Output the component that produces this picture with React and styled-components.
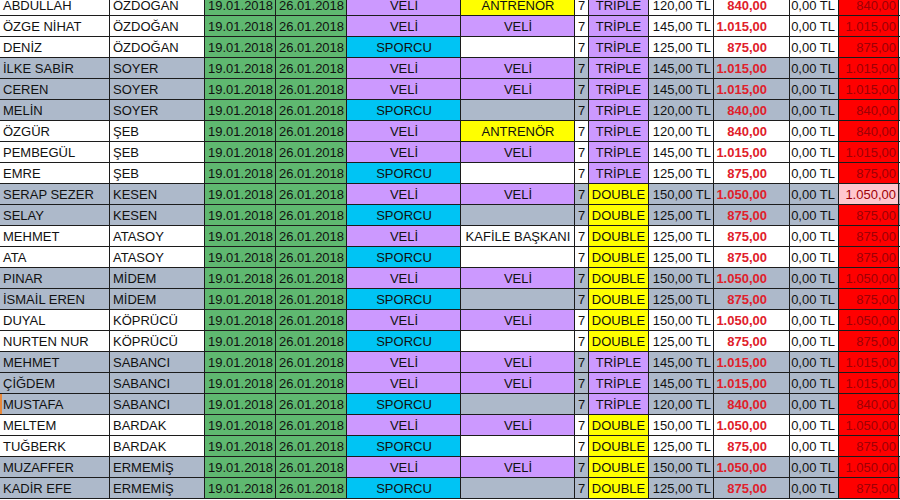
import React from "react";
import styled, { createGlobalStyle } from "styled-components";

const Global = createGlobalStyle`
  html, body { margin: 0; padding: 0; background: #ffffff; overflow: hidden; }
  #root { width: 900px; height: 500px; overflow: hidden; }
`;

const C = {
  white: "#ffffff",
  gray: "#adb9ca",
  green: "#5fb870",
  purple: "#cc99ff",
  cyan: "#00c4f4",
  yellow: "#ffff00",
  red: "#ff0000",
  pink: "#ffc7ce",
  line: "#1c1c1c",
};

const Sheet = styled.div`
  margin-top: -5px;
  display: flex;
  flex-direction: column;
  font-family: "Liberation Sans", Arial, sans-serif;
  font-size: 13px;
  color: #111111;
`;

const Row = styled.div`
  display: grid;
  grid-template-columns: 110px 95px 71px 71px 114px 114px 14px 60px 65px 76px 49px 60px 1fr;
  height: 21px;
  background: ${(p) => p.$bg};
`;

const Cell = styled.div`
  box-sizing: border-box;
  height: 21px;
  border-right: 1px solid ${C.line};
  border-bottom: 1px solid ${C.line};
  background: ${(p) => p.$bg || "transparent"};
  color: ${(p) => p.$color || "#111111"};
  font-weight: ${(p) => (p.$bold ? 700 : 400)};
  display: flex;
  align-items: flex-end;
  justify-content: ${(p) =>
    p.$align === "center" ? "center" : p.$align === "right" ? "flex-end" : "flex-start"};
  padding: 0 ${(p) => (p.$pr != null ? p.$pr : 2)}px 2px ${(p) => (p.$pl != null ? p.$pl : 3)}px;
  line-height: 15px;
  white-space: nowrap;
  overflow: hidden;
  box-shadow: ${(p) => (p.$marked ? "inset 2px 0 0 #e8883a" : "none")};
`;

const Filler = styled.div`
  border-bottom: 1px solid ${C.line};
`;

const rows = [
  ["ABDULLAH", "ÖZDOĞAN", "V", "ANTRENOR", "TRIPLE", "120,00 TL", "840,00", "w"],
  ["ÖZGE NİHAT", "ÖZDOĞAN", "V", "VELİ", "TRİPLE", "145,00 TL", "1.015,00", "w"],
  ["DENİZ", "ÖZDOĞAN", "S", "", "TRİPLE", "125,00 TL", "875,00", "w", "white2"],
  ["İLKE SABİR", "SOYER", "V", "VELİ", "TRİPLE", "145,00 TL", "1.015,00", "g"],
  ["CEREN", "SOYER", "V", "VELİ", "TRİPLE", "145,00 TL", "1.015,00", "g"],
  ["MELİN", "SOYER", "S", "", "TRİPLE", "120,00 TL", "840,00", "g"],
  ["ÖZGÜR", "ŞEB", "V", "ANTRENÖR", "TRİPLE", "120,00 TL", "840,00", "w"],
  ["PEMBEGÜL", "ŞEB", "V", "VELİ", "TRİPLE", "145,00 TL", "1.015,00", "w"],
  ["EMRE", "ŞEB", "S", "", "TRİPLE", "125,00 TL", "875,00", "w"],
  ["SERAP SEZER", "KESEN", "V", "VELİ", "DOUBLE", "150,00 TL", "1.050,00", "g", "pink"],
  ["SELAY", "KESEN", "S", "", "DOUBLE", "125,00 TL", "875,00", "g"],
  ["MEHMET", "ATASOY", "V", "KAFİLE BAŞKANI", "DOUBLE", "125,00 TL", "875,00", "w"],
  ["ATA", "ATASOY", "S", "", "DOUBLE", "125,00 TL", "875,00", "w"],
  ["PINAR", "MİDEM", "V", "VELİ", "DOUBLE", "150,00 TL", "1.050,00", "g"],
  ["İSMAİL EREN", "MİDEM", "S", "", "DOUBLE", "125,00 TL", "875,00", "g"],
  ["DUYAL", "KÖPRÜCÜ", "V", "VELİ", "DOUBLE", "150,00 TL", "1.050,00", "w"],
  ["NURTEN NUR", "KÖPRÜCÜ", "S", "", "DOUBLE", "125,00 TL", "875,00", "w"],
  ["MEHMET", "SABANCI", "V", "VELİ", "TRİPLE", "145,00 TL", "1.015,00", "g"],
  ["ÇİĞDEM", "SABANCI", "V", "VELİ", "TRİPLE", "145,00 TL", "1.015,00", "g"],
  ["MUSTAFA", "SABANCI", "S", "", "TRİPLE", "120,00 TL", "840,00", "g", "marked"],
  ["MELTEM", "BARDAK", "V", "VELİ", "DOUBLE", "150,00 TL", "1.050,00", "w"],
  ["TUĞBERK", "BARDAK", "S", "", "DOUBLE", "125,00 TL", "875,00", "w"],
  ["MUZAFFER", "ERMEMİŞ", "V", "VELİ", "DOUBLE", "150,00 TL", "1.050,00", "g"],
  ["KADİR EFE", "ERMEMİŞ", "S", "", "DOUBLE", "125,00 TL", "875,00", "g"],
];

function roleBg(text, rowBg) {
  if (text === "VELİ") return C.purple;
  if (text.startsWith("ANTREN")) return C.yellow;
  if (text === "KAFİLE BAŞKANI") return C.white;
  return rowBg;
}

export default function App() {
  return (
    <>
      <Global />
      <Sheet>
        {rows.map((r, i) => {
          const [name, surname, role, role2, type, price, total, shade, flag] = r;
          const bg = shade === "g" ? C.gray : C.white;
          const isDouble = type === "DOUBLE";
          return (
            <Row key={i} $bg={bg}>
              <Cell $marked={flag === "marked"}>{name}</Cell>
              <Cell>{surname}</Cell>
              <Cell $bg={C.green}>19.01.2018</Cell>
              <Cell $bg={C.green}>26.01.2018</Cell>
              <Cell $bg={role === "V" ? C.purple : C.cyan} $align="center">
                {role === "V" ? "VELİ" : "SPORCU"}
              </Cell>
              <Cell $bg={roleBg(role2, bg)} $align="center">{role2}</Cell>
              <Cell $align="center" $pl={0} $pr={0}>7</Cell>
              <Cell $bg={isDouble ? C.yellow : C.purple} $align="center" $pl={0} $pr={0}>
                {type}
              </Cell>
              <Cell $align="right" $pr={2}>{price}</Cell>
              <Cell $align="right" $pr={22} $bold $color="#e0202a">{total}</Cell>
              <Cell $align="right" $pr={3}>0,00 TL</Cell>
              <Cell
                $align="right"
                $pr={2}
                $bg={flag === "pink" ? C.pink : C.red}
                $color="#9c0006"
              >
                {total}
              </Cell>
              <Filler />
            </Row>
          );
        })}
      </Sheet>
    </>
  );
}
